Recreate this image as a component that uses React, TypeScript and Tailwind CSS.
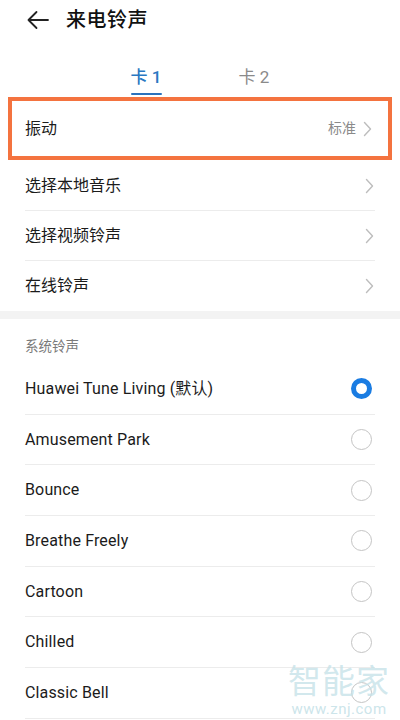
import React from "react";

const font = { fontFamily: '"Roboto", "Noto Sans CJK SC", sans-serif' };

function Chevron() {
  return (
    <svg width="9" height="16" viewBox="0 0 9 16" fill="none">
      <path d="M1.5 1.5 L7.5 8 L1.5 14.5" stroke="#bdbdbd" strokeWidth="1.4" strokeLinecap="round" strokeLinejoin="round" />
    </svg>
  );
}

function Radio({ checked }: { checked?: boolean }) {
  return checked ? (
    <div className="w-[21px] h-[21px] rounded-full border-[5px] border-[#1a7ce2] bg-white" />
  ) : (
    <div className="w-[21px] h-[21px] rounded-full border-[1.5px] border-[#c4c4c4] bg-white" />
  );
}

function NavRow({ label, last }: { label: string; last?: boolean }) {
  return (
    <div className="px-[25px]">
      <div className={`h-[50px] flex items-center justify-between pr-[1px] ${last ? "" : "border-b border-[#ececec]"}`}>
        <span className="text-[16px] text-[#1b1b1b]">{label}</span>
        <Chevron />
      </div>
    </div>
  );
}

function ToneRow({ label, checked }: { label: string; checked?: boolean }) {
  return (
    <div className="px-[25px]">
      <div className="h-[50.7px] flex items-center justify-between border-b border-[#ececec]">
        <span className="text-[16px] text-[#1b1b1b] tracking-[0.15px]">{label}</span>
        <div className="mr-[3px]">
          <Radio checked={checked} />
        </div>
      </div>
    </div>
  );
}

export default function App() {
  const tones = [
    "Amusement Park",
    "Bounce",
    "Breathe Freely",
    "Cartoon",
    "Chilled",
    "Classic Bell",
  ];
  return (
    <div className="w-[400px] h-[720px] bg-white overflow-hidden relative" style={font}>
      {/* Header */}
      <div className="h-[40px] flex items-center pl-[26px]">
        <svg width="24" height="20" viewBox="0 0 24 20" fill="none">
          <path d="M22 10 H2.5 M10.5 2 L2.5 10 L10.5 18" stroke="#222" strokeWidth="1.8" strokeLinecap="round" strokeLinejoin="round" />
        </svg>
        <span className="ml-[16px] text-[20px] font-medium text-[#111] tracking-[0.5px]">来电铃声</span>
      </div>

      {/* Tabs */}
      <div className="h-[57px] flex justify-center pt-[25px]">
        <div className="w-[108px] flex flex-col items-center">
          <span className="text-[17px] leading-[24px] font-medium text-[#2a78c2]">卡 1</span>
          <div className="mt-[4px] w-[31px] h-[2px] rounded bg-[#2a72bd]" />
        </div>
        <div className="w-[108px] flex flex-col items-center">
          <span className="text-[17px] leading-[24px] text-[#8a8a8a]">卡 2</span>
        </div>
      </div>

      {/* Highlighted vibration row */}
      <div className="mx-[8px] h-[63px] border-[4px] border-[#f4733f] flex items-center justify-between pl-[13px] pr-[16px]">
        <span className="text-[16px] text-[#1b1b1b]">振动</span>
        <div className="flex items-center gap-[7px]">
          <span className="text-[14px] text-[#8a8a8a]">标准</span>
          <Chevron />
        </div>
      </div>

      <div className="mt-[1px]">
        <NavRow label="选择本地音乐" />
        <NavRow label="选择视频铃声" />
        <NavRow label="在线铃声" last />
      </div>

      <div className="h-[8px] bg-[#f3f3f3]" />

      <div className="h-[45px] flex items-center px-[25px] pt-[10px]">
        <span className="text-[13.5px] text-[#7a7a7a]">系统铃声</span>
      </div>

      <ToneRow label="Huawei Tune Living (默认)" checked />
      {tones.map((t) => (
        <ToneRow key={t} label={t} />
      ))}

      {/* Watermark */}
      <div className="absolute right-[10px] bottom-[2px] flex flex-col items-center pointer-events-none">
        <span className="text-[33px] leading-[38px] text-[#c6e2e8]/80 tracking-[1px]">智能家</span>
        <span className="text-[15px] leading-[17px] text-[#c6e2e8]/90 tracking-[0.5px]">www.znj.com</span>
      </div>
    </div>
  );
}
